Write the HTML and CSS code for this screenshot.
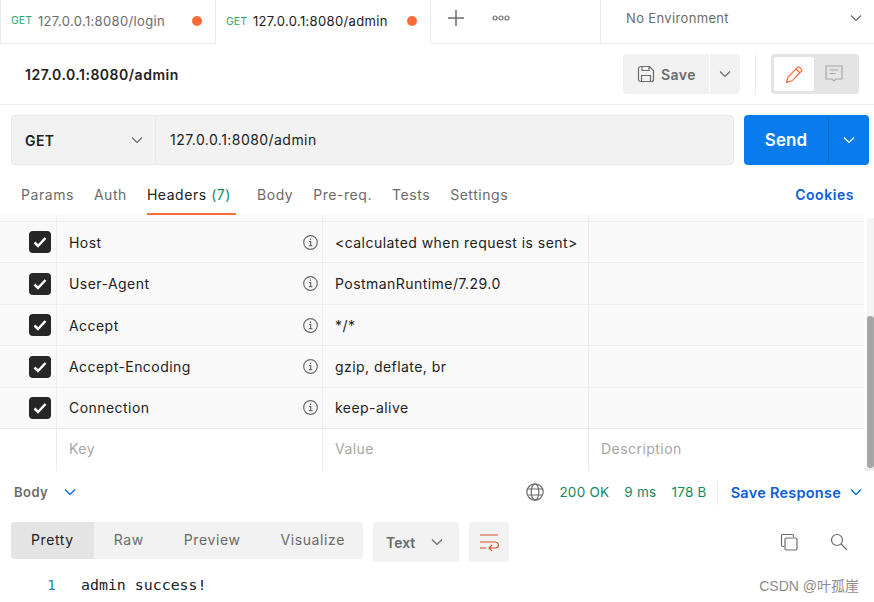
FILE: index.html
```html
<!DOCTYPE html>
<html lang="en">

<head>
    <meta charset="UTF-8">
    <title>127.0.0.1:8080/admin</title>
    <link rel="stylesheet" href="styles.css">
</head>

<body>
    <div class="tabbar">
        <div class="tab">
            <span class="tab-method">GET</span>
            <span class="tab-url">127.0.0.1:8080/login</span>
            <span class="tab-dot"></span>
        </div>
        <div class="tab active">
            <span class="tab-method">GET</span>
            <span class="tab-url">127.0.0.1:8080/admin</span>
            <span class="tab-dot"></span>
        </div>
        <div class="tab-tools">
            <svg class="icon-plus" width="18" height="18" viewBox="0 0 18 18"><path d="M9 1v16M1 9h16" /></svg>
            <svg class="icon-more" width="18" height="6" viewBox="0 0 18 6"><circle cx="3" cy="3" r="2" /><circle cx="9" cy="3" r="2" /><circle cx="15" cy="3" r="2" /></svg>
        </div>
        <div class="env">
            <span>No Environment</span>
            <svg class="chev" width="12" height="8" viewBox="0 0 12 8"><path d="M1 1.5l5 5 5-5" /></svg>
        </div>
    </div>

    <div class="titlebar">
        <div class="title">127.0.0.1:8080/admin</div>
        <div class="save-group">
            <div class="btn-save">
                <svg width="18" height="18" viewBox="0 0 18 18"><path d="M1.5 3.5a2 2 0 0 1 2-2h9l4 4v9a2 2 0 0 1-2 2h-11a2 2 0 0 1-2-2z M5 1.5v4h7v-4 M4.500 16.500v-6h9v6" /></svg>
                <span>Save</span>
            </div>
            <div class="btn-save-more">
                <svg class="chev" width="12" height="8" viewBox="0 0 12 8"><path d="M1 1.500l5 5 5-5" /></svg>
            </div>
        </div>
        <div class="title-sep"></div>
        <div class="mode-switch">
            <div class="mode on">
                <svg width="19" height="19" viewBox="0 0 19 19"><path d="M1.500 17.500l1.500-5.500 9.500-9.500a1.500 1.500 0 0 1 2-.2l2 2a1.500 1.500 0 0 1-.2 2l-9.300 9.500z M11 4l4 4" /></svg>
            </div>
            <div class="mode">
                <svg width="18" height="18" viewBox="0 0 18 18"><path d="M1 1h16v13h-6l-2 2-2-2h-6z M4.500 5h9M4.500 8.500h6" /></svg>
            </div>
        </div>
    </div>

    <div class="request">
        <div class="url-box">
            <div class="method">
                <span>GET</span>
                <svg class="chev" width="12" height="8" viewBox="0 0 12 8"><path d="M1 1.500l5 5 5-5" /></svg>
            </div>
            <div class="url">127.0.0.1:8080/admin</div>
        </div>
        <div class="send">
            <span class="send-label">Send</span>
            <span class="send-more">
                <svg width="12" height="8" viewBox="0 0 12 8"><path d="M1 1.500l5 5 5-5" /></svg>
            </span>
        </div>
    </div>

    <div class="req-tabs">
        <span class="req-tab">Params</span>
        <span class="req-tab">Auth</span>
        <span class="req-tab current">Headers <em>(7)</em></span>
        <span class="req-tab">Body</span>
        <span class="req-tab">Pre-req.</span>
        <span class="req-tab">Tests</span>
        <span class="req-tab">Settings</span>
        <span class="cookies">Cookies</span>
    </div>

    <div class="headers">
        <div class="scroll-track"><div class="scroll-thumb"></div></div>
        <div class="hrow stub"><div></div><div></div><div></div><div></div></div>
        <div class="hrow">
            <div class="check"><span class="box"><svg width="14" height="12" viewBox="0 0 14 12"><path d="M1.500 6.500l3.500 3.500 7.500-8" /></svg></span></div>
            <div class="key">Host<svg class="info" width="15" height="15" viewBox="0 0 15 15"><circle cx="7.500" cy="7.500" r="6.800" /><path d="M6 6.500h1.700v4M5.800 10.700h3.600M7.500 3.500v1.600" /></svg></div>
            <div class="val">&lt;calculated when request is sent&gt;</div>
            <div></div>
        </div>
        <div class="hrow">
            <div class="check"><span class="box"><svg width="14" height="12" viewBox="0 0 14 12"><path d="M1.500 6.500l3.500 3.500 7.500-8" /></svg></span></div>
            <div class="key">User-Agent<svg class="info" width="15" height="15" viewBox="0 0 15 15"><circle cx="7.500" cy="7.500" r="6.800" /><path d="M6 6.500h1.700v4M5.800 10.700h3.600M7.500 3.500v1.600" /></svg></div>
            <div class="val">PostmanRuntime/7.29.0</div>
            <div></div>
        </div>
        <div class="hrow">
            <div class="check"><span class="box"><svg width="14" height="12" viewBox="0 0 14 12"><path d="M1.500 6.500l3.500 3.500 7.500-8" /></svg></span></div>
            <div class="key">Accept<svg class="info" width="15" height="15" viewBox="0 0 15 15"><circle cx="7.500" cy="7.500" r="6.800" /><path d="M6 6.500h1.700v4M5.800 10.700h3.600M7.500 3.500v1.600" /></svg></div>
            <div class="val">*/*</div>
            <div></div>
        </div>
        <div class="hrow">
            <div class="check"><span class="box"><svg width="14" height="12" viewBox="0 0 14 12"><path d="M1.500 6.500l3.500 3.500 7.500-8" /></svg></span></div>
            <div class="key">Accept-Encoding<svg class="info" width="15" height="15" viewBox="0 0 15 15"><circle cx="7.500" cy="7.500" r="6.800" /><path d="M6 6.500h1.700v4M5.800 10.700h3.600M7.500 3.500v1.600" /></svg></div>
            <div class="val">gzip, deflate, br</div>
            <div></div>
        </div>
        <div class="hrow">
            <div class="check"><span class="box"><svg width="14" height="12" viewBox="0 0 14 12"><path d="M1.500 6.500l3.500 3.500 7.500-8" /></svg></span></div>
            <div class="key">Connection<svg class="info" width="15" height="15" viewBox="0 0 15 15"><circle cx="7.500" cy="7.500" r="6.800" /><path d="M6 6.500h1.700v4M5.800 10.700h3.600M7.500 3.500v1.600" /></svg></div>
            <div class="val">keep-alive</div>
            <div></div>
        </div>
        <div class="hrow blank">
            <div></div>
            <div class="key">Key</div>
            <div class="val">Value</div>
            <div class="val">Description</div>
        </div>
    </div>

    <div class="res-bar">
        <span class="res-body">Body</span>
        <svg class="chev blue" width="12" height="8" viewBox="0 0 12 8"><path d="M1 1.500l5 5 5-5" /></svg>
        <svg class="globe" width="18" height="18" viewBox="0 0 18 18"><circle cx="9" cy="9" r="8.200" /><ellipse cx="9" cy="9" rx="3.800" ry="8.200" /><path d="M1.500 6h15M1.500 12h15" /></svg>
        <span class="stat first">200 OK</span>
        <span class="stat">9 ms</span>
        <span class="stat">178 B</span>
        <span class="res-sep"></span>
        <span class="save-res">Save Response</span>
        <svg class="chev blue" width="12" height="8" viewBox="0 0 12 8"><path d="M1 1.500l5 5 5-5" /></svg>
    </div>

    <div class="res-tools">
        <div class="views">
            <span class="view on">Pretty</span>
            <span class="view">Raw</span>
            <span class="view">Preview</span>
            <span class="view">Visualize</span>
        </div>
        <div class="format">
            <span>Text</span>
            <svg class="chev" width="12" height="8" viewBox="0 0 12 8"><path d="M1 1.500l5 5 5-5" /></svg>
        </div>
        <div class="wrap-btn">
            <svg width="20" height="18" viewBox="0 0 20 18"><path d="M1 2h18M1 9h15.500a2.500 2.500 0 0 1 0 6h-6M13 12l-3 3 3 3M1 15h6" /></svg>
        </div>
        <div class="res-icons">
            <svg width="18" height="18" viewBox="0 0 18 18"><path d="M4 13.500h-1a1.500 1.500 0 0 1-1.500-1.500v-9a1.500 1.500 0 0 1 1.500-1.500h9a1.500 1.500 0 0 1 1.500 1.500v1" /><rect x="5" y="5" width="12" height="12" rx="1.500" /></svg>
            <svg width="18" height="18" viewBox="0 0 18 18"><circle cx="7" cy="7" r="5.500" /><path d="M11 11l6 6" /></svg>
        </div>
    </div>

    <div class="code">
        <span class="line-no">1</span>
        <span class="code-text">admin success!</span>
    </div>

    <div class="watermark">CSDN @叶孤崖</div>
</body>

</html>
```

FILE: styles.css
```css
* {
    box-sizing: border-box;
}

html,
body {
    height: 100%;
}

body {
    margin: 0;
    overflow: hidden;
    position: relative;
    background: #fff;
    color: #212121;
    font-family: Inter, 'Noto Sans', sans-serif;
    font-size: 14px;
    letter-spacing: .45px;
}

svg {
    fill: none;
    stroke: #6b6b6b;
    stroke-width: 1.2;
    display: block;
    flex: none;
}

.chev {
    stroke: #6b6b6b;
}

.chev.blue {
    stroke: #0b74de;
    stroke-width: 1.5;
}

/* top tabs */
.tabbar {
    display: flex;
    height: 44px;
    border-bottom: 1px solid #ededed;
}

.tab {
    width: 215px;
    height: 44px;
    display: flex;
    align-items: center;
    padding: 0 13px 2px 10px;
    border-left: 1px solid #ededed;
    border-bottom: 1px solid #ededed;
    color: #6b6b6b;
}

.tab.active {
    width: 216px;
    border-bottom: none;
    border-right: 1px solid #ededed;
    color: #212121;
    background: #fff;
    padding-right: 13px;
}

.tab-method {
    font-size: 10.500px;
    letter-spacing: 0;
    color: #2fa968;
    margin-right: 6px;
}

.tab-url {
    font-size: 13px;
    letter-spacing: .35px;
    flex: 1;
    white-space: nowrap;
}

.tab-dot {
    width: 10px;
    height: 10px;
    border-radius: 50%;
    background: #ff6c37;
}

.tab-tools {
    width: 169px;
    height: 43px;
    display: flex;
    align-items: center;
    padding: 0 0 7px 16px;
    gap: 27px;
}

.icon-plus {
    stroke: #6b6b6b;
    stroke-width: 1.5;
}

.icon-more {
    stroke: #6b6b6b;
}

.env {
    flex: 1;
    height: 43px;
    border-left: 1px solid #ededed;
    display: flex;
    align-items: center;
    justify-content: space-between;
    padding: 0 12px 7px 25px;
    color: #6b6b6b;
    font-size: 13px;
    letter-spacing: .35px;
}

/* title row */
.titlebar {
    height: 61px;
    display: flex;
    align-items: center;
    padding: 0 15px 0 25px;
    border-bottom: 1px solid #ededed;
}

.title {
    flex: 1;
    font-size: 14px;
    font-weight: 600;
    letter-spacing: .5px;
}

.save-group {
    display: flex;
    gap: 1px;
}

.btn-save {
    width: 86px;
    height: 40px;
    background: #f2f2f2;
    border-radius: 4px 0 0 4px;
    display: flex;
    align-items: center;
    padding-left: 14px;
    gap: 6px;
    color: #6b6b6b;
    font-weight: 600;
}

.btn-save-more {
    width: 30px;
    height: 40px;
    background: #f2f2f2;
    border-radius: 0 4px 4px 0;
    display: flex;
    align-items: center;
    justify-content: center;
}

.title-sep {
    width: 1px;
    height: 40px;
    background: #ededed;
    margin: 0 15px;
}

.mode-switch {
    width: 88px;
    height: 40px;
    padding: 3px;
    background: #e4e4e4;
    border-radius: 4px;
    display: flex;
}

.mode {
    width: 40px;
    height: 34px;
    border-radius: 3px;
    display: flex;
    align-items: center;
    justify-content: center;
}

.mode svg {
    stroke: #a6a6a6;
}

.mode.on {
    background: #fff;
}

.mode.on svg {
    stroke: #ff6c37;
}

/* url row */
.request {
    display: flex;
    gap: 10px;
    padding: 10px 5px 0 11px;
}

.url-box {
    width: 723px;
    height: 50px;
    display: flex;
    background: #f2f2f2;
    border: 1px solid #e8e8e8;
    border-radius: 4px;
}

.method {
    width: 144px;
    border-right: 1px solid #e8e8e8;
    display: flex;
    align-items: center;
    justify-content: space-between;
    padding: 0 12px 0 13px;
    font-weight: 600;
}

.url {
    padding-left: 14px;
    line-height: 47px;
}

.send {
    width: 125px;
    height: 50px;
    display: flex;
    background: #097bed;
    border-radius: 4px;
    color: #fff;
}

.send-label {
    flex: 1;
    text-align: center;
    line-height: 50px;
    font-size: 17px;
    font-weight: 600;
    letter-spacing: .1px;
}

.send-more {
    width: 41px;
    border-left: 1px solid #0b6ccb;
    display: flex;
    align-items: center;
    justify-content: center;
}

.send-more svg {
    stroke: #fff;
}

/* request tabs */
.req-tabs {
    height: 50px;
    display: flex;
    align-items: flex-start;
    padding: 0 20px 0 21px;
    color: #6b6b6b;
    letter-spacing: .55px;
}

.req-tab {
    height: 50px;
    line-height: 60px;
    margin-right: 20px;
    white-space: nowrap;
}

.req-tab.current {
    color: #212121;
    border-bottom: 2px solid #ff6c37;
    margin-right: 21px;
    padding-right: 5px;
}

.req-tab em {
    font-style: normal;
    color: #138a5b;
}

.cookies {
    margin-left: auto;
    line-height: 60px;
    color: #0b5ed7;
    font-weight: 600;
}

/* headers table */
.headers {
    height: 256px;
    position: relative;
    border-bottom: 3px solid #ededed;
}

.scroll-track {
    position: absolute;
    right: 0;
    top: 3px;
    bottom: 0;
    width: 7px;
    background: #f4f4f4;
}

.scroll-thumb {
    position: absolute;
    right: 0;
    top: 98px;
    width: 7px;
    height: 152px;
    background: #a6a6a6;
    border-radius: 3px;
}

.hrow {
    display: grid;
    grid-template-columns: 56px 266px 266px 276px;
    width: 864px;
    height: 41.450px;
    background: #f9f9f9;
    border-bottom: 1px solid #ededed;
}

.hrow > div {
    border-left: 1px solid #ededed;
    display: flex;
    align-items: center;
    padding-left: 12px;
    white-space: nowrap;
}

.hrow > div:first-child {
    border-left: none;
}

.hrow.stub {
    height: 7px;
}

.hrow.blank {
    height: 42px;
    background: #fff;
    color: #a6a6a6;
    border-bottom: none;
}

.hrow.blank > div {
    padding-bottom: 4px;
}

.hrow .key {
    justify-content: space-between;
    padding-right: 4px;
}

.check {
    justify-content: flex-end;
    padding: 0 5px 0 0 !important;
}

.box {
    width: 22px;
    height: 22px;
    background: #262626;
    border-radius: 4px;
    display: flex;
    align-items: center;
    justify-content: center;
}

.box svg {
    stroke: #fff;
    stroke-width: 2.500;
}

.info {
    stroke: #6b6b6b;
}

/* response */
.res-bar {
    height: 42px;
    display: flex;
    align-items: center;
    padding: 0 12px 0 14px;
    font-size: 13.500px;
}

.res-body {
    font-weight: 600;
    color: #6b6b6b;
    font-size: 13px;
    margin-right: 16px;
}

.globe {
    margin-left: auto;
    margin-right: 15px;
}

.stat {
    color: #138a5b;
    margin-right: 15px;
    letter-spacing: .25px;
}

.res-sep {
    width: 1px;
    height: 25px;
    background: #ededed;
    margin-right: 13px;
    margin-left: -5px;
}

.save-res {
    color: #0b5ed7;
    font-weight: 600;
    font-size: 14.500px;
    letter-spacing: .25px;
    margin-right: 9px;
}

.res-tools {
    display: flex;
    padding: 9px 0 0 11px;
    height: 62px;
}

.views {
    width: 352px;
    height: 37px;
    background: #f2f2f2;
    border-radius: 4px;
    display: flex;
    overflow: hidden;
    color: #6b6b6b;
    letter-spacing: .6px;
}

.view {
    padding: 0 20px;
    line-height: 36px;
}

.view.on {
    background: #e4e4e4;
    color: #212121;
}

.format {
    width: 86px;
    height: 40px;
    margin-left: 10px;
    background: #f2f2f2;
    border-radius: 4px;
    display: flex;
    align-items: center;
    justify-content: space-between;
    padding: 0 16px 0 13px;
    font-weight: 600;
    color: #6b6b6b;
    letter-spacing: 0;
}

.wrap-btn {
    width: 40px;
    height: 40px;
    margin-left: 10px;
    background: #f2f2f2;
    border-radius: 4px;
    display: flex;
    align-items: center;
    justify-content: center;
}

.wrap-btn svg {
    stroke: #d8512a;
}

.res-icons {
    margin-left: auto;
    display: flex;
    gap: 32px;
    padding: 11px 26px 0 0;
}

.code {
    font-family: 'DejaVu Sans Mono', monospace;
    font-size: 14.900px;
    letter-spacing: 0;
    display: flex;
    padding-top: 1px;
}

.line-no {
    width: 81px;
    padding-left: 47px;
    color: #2f86c5;
}

.watermark {
    position: absolute;
    right: 15px;
    bottom: 7px;
    font-size: 14px;
    letter-spacing: 0;
    color: #8c8c8c;
    font-family: 'Liberation Sans', 'Noto Sans CJK SC', sans-serif;
}
```
